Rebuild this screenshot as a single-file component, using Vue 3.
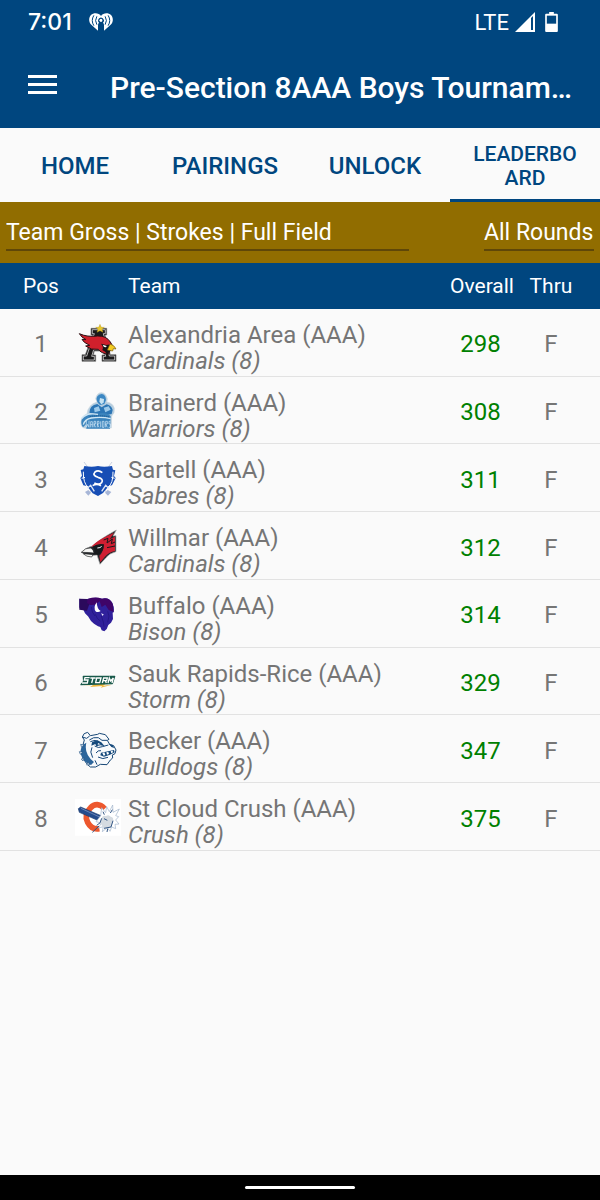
<script setup>
import { ref } from 'vue'

const tabs = ['HOME', 'PAIRINGS', 'UNLOCK', 'LEADERBOARD']
const activeTab = ref('LEADERBOARD')
const view = ref('Team Gross | Strokes | Full Field')
const round = ref('All Rounds')

const teams = [
  { pos: 1, logo: 'alexandria', school: 'Alexandria Area (AAA)', name: 'Cardinals (8)', overall: 298, thru: 'F' },
  { pos: 2, logo: 'brainerd', school: 'Brainerd (AAA)', name: 'Warriors (8)', overall: 308, thru: 'F' },
  { pos: 3, logo: 'sartell', school: 'Sartell (AAA)', name: 'Sabres (8)', overall: 311, thru: 'F' },
  { pos: 4, logo: 'willmar', school: 'Willmar (AAA)', name: 'Cardinals (8)', overall: 312, thru: 'F' },
  { pos: 5, logo: 'buffalo', school: 'Buffalo (AAA)', name: 'Bison (8)', overall: 314, thru: 'F' },
  { pos: 6, logo: 'sauk', school: 'Sauk Rapids-Rice (AAA)', name: 'Storm (8)', overall: 329, thru: 'F' },
  { pos: 7, logo: 'becker', school: 'Becker (AAA)', name: 'Bulldogs (8)', overall: 347, thru: 'F' },
  { pos: 8, logo: 'crush', school: 'St Cloud Crush (AAA)', name: 'Crush (8)', overall: 375, thru: 'F' },
]
</script>

<template>
  <div class="screen">
    <header class="top">
      <div class="status">
        <span class="clock">7:01</span>
        <svg class="radio" viewBox="0 0 72 54" aria-hidden="true">
          <path fill="#fff" d="M36 9C30-1 14-2 6 6c-8 9-7 21 1 29l20 18V36a10 10 0 0 1 3-7 8 8 0 1 1 12 0 10 10 0 0 1 3 7v17l20-18c8-8 9-20 1-29C58-2 42-1 36 9z" />
          <path fill="#00467f" d="M31 54V38q5-6 10 0v16z" />
          <circle cx="36" cy="22" r="5" fill="#fff" />
          <g fill="none" stroke="#00467f" stroke-width="3" stroke-linecap="round">
            <circle cx="36" cy="22" r="7" />
            <path d="M23 11q-7 12 0 23M49 11q7 12 0 23M14 8q-9 15 0 29M58 8q9 15 0 29" />
          </g>
        </svg>
        <span class="network">LTE</span>
        <svg class="signal" viewBox="0 0 60 60" aria-hidden="true">
          <path fill="#fff" d="M60 0v60H0z" />
          <path fill="#00467f" d="M48 18l6-6v42h-6z" />
        </svg>
        <svg class="battery" viewBox="0 0 38 60" aria-hidden="true">
          <path fill="#fff" d="M12 0h14v5h9q3 0 3 3v49q0 3-3 3H3q-3 0-3-3V8q0-3 3-3h9z" />
          <path fill="#00467f" d="M5 11h28v24H5z" />
        </svg>
      </div>
      <div class="bar">
        <button class="menu" aria-label="Open menu">
          <span></span><span></span><span></span>
        </button>
        <h1>Pre-Section 8AAA Boys Tournam…</h1>
      </div>
    </header>

    <nav class="tabs">
      <button
        v-for="tab in tabs"
        :key="tab"
        class="tab"
        :class="{ active: tab === activeTab, long: tab.length > 9 }"
        @click="activeTab = tab"
      >{{ tab }}</button>
    </nav>

    <main>
      <div class="filters">
        <select v-model="view" class="view" aria-label="Leaderboard view">
          <option>Team Gross | Strokes | Full Field</option>
        </select>
        <select v-model="round" class="round" aria-label="Round">
          <option>All Rounds</option>
        </select>
      </div>

      <table class="board">
        <thead>
          <tr>
            <th class="pos">Pos</th>
            <th class="crest"></th>
            <th class="team">Team</th>
            <th class="overall">Overall</th>
            <th class="thru">Thru</th>
          </tr>
        </thead>
        <tbody>
          <tr v-for="t in teams" :key="t.pos">
            <td class="pos">{{ t.pos }}</td>
            <td class="crest">
              <svg class="logo" viewBox="0 0 138 120" aria-hidden="true">
                <g v-if="t.logo === 'alexandria'">
                  <path fill="#1b1a1b" stroke="#777" stroke-width="2" d="M48 13h47v20h-5l16 59h17v20H81V93h7l-3-12H58l-3 12h7v19H21V92h10l22-59h-5z" />
                  <path fill="none" stroke="#fff" stroke-width="2" d="M52 17h39v12h-6l18 67h16v12H85V97h7l-5-20H56l-6 20h8v11H25V96h10l23-67h-6z" />
                  <path fill="#d0202c" stroke="#2a1114" stroke-width="3" d="M13 29q24 11 55 7 26-1 38 18l7 12-7 12-6 13q-22-3-30-15-22 3-38-10l12-2Q24 55 21 46l12 1Q19 40 13 29z" />
                  <path fill="#161314" d="M78 59l16 4 14-2 4 8-7 11-8 12q-6-10-15-14 5-9-4-19z" />
                  <path fill="#fff" d="M83 62l12 4-2 4q-8 0-10-8z" />
                  <path fill="#f4cc22" stroke="#77570d" stroke-width="2" d="M105 60q14 4 18 15l-8-1-2 7-16-3z" />
                  <path fill="#e9c82e" stroke="#a88b1d" stroke-width="1" d="M75 1l4 9h9l-7 6 3 9-9-5-9 5 3-9-7-6h9z" />
                </g>
                <g v-else-if="t.logo === 'brainerd'">
                  <path fill="#b5cddf" stroke="#c9d6df" stroke-width="2" d="M62 20Q66 2 79 2t18 19l-2 9q18 2 23 19l-1 13-7 10-1 36-78 1q-15-2-13-20 2-17 18-23 3-28 30-36z" />
                  <path fill="#3b87c3" d="M66 14q5-8 14-8 12 2 13 18l-5 12-13 3q-14-12-9-25z" />
                  <path fill="#c5e2f2" d="M75 18l12 3-1 11-7 5-6-8z" />
                  <path fill="#2c76b5" d="M43 62q1-22 24-26l13 10 15-9q14 3 18 17l-3 12-26 5z" />
                  <path fill="#9dcaea" d="M57 48l14-5 5 13-17 5zM86 47l15-4 6 10-16 8z" />
                  <path fill="#3b84bd" d="M20 83q19-22 49-18 26-6 38 8l-2 37H34l-1-13-9 9q-7-9-4-23z" />
                  <path fill="none" stroke="#cfe6f4" stroke-width="4" d="M19 80q15-19 50-13M25 98q4-16 24-20 30-5 58 2" />
                  <path fill="none" stroke="#16568e" stroke-width="3" stroke-dasharray="4 2" d="M44 74q30-6 60 1" />
                  <path fill="none" stroke="#dceefa" stroke-width="2" d="M34 86v20l4-9 4 9V86M47 106V89h5v17M47 98h5M57 106V88h5v8h-5l5 10M67 106V88h5v8h-5l5 10M77 88v18M82 88h5v18h-5zM92 106V88h5v8h-5l5 10M106 88h-4v8h4v10h-5" />
                </g>
                <g v-else-if="t.logo === 'sartell'">
                  <path fill="none" stroke="#afb9d2" stroke-width="2" d="M27 6l68 92M111 6l-68 92" />
                  <path fill="#174eb5" d="M28 18q23 4 41 0 17 4 42 0l3 11 7 2-4 17 5 6-11 22-9 1-18 22-15 9-16-8-17-22-11-2-9-22 5-7-4-17 8-2z" />
                  <path fill="none" stroke="#fff" stroke-width="3" d="M25 35q-1 35 15 47M114 35q1 35-15 47M20 55l10-3M119 55l-10-3" />
                  <path fill="none" stroke="#dce5f5" stroke-width="4" d="M37 85l10-9 11 18M101 85l-9-9-12 18" />
                  <path fill="none" stroke="#fff" stroke-width="5" d="M82 38q-12-10-22-2-9 10 9 16 18 5 11 16-8 8-22 1M53 77q12-8 25 0" />
                  <path fill="#a7b6d7" d="M30 96l10-6 8 8-8 9zM109 96l-11-6-8 8 9 9z" />
                </g>
                <g v-else-if="t.logo === 'willmar'">
                  <path fill="#25272b" stroke="#aaa" stroke-width="2" d="M19 73q16-16 34-19 17-18 71-48l-10 18 9-1v48q-20 5-30 18l-18 20-9-28-25 3q-12-1-22-11z" />
                  <path fill="#cf1f32" d="M50 55q18-20 67-41l-13 20 16-8v43q-19 4-29 16l-15 18-3-20q12-9 12-31-15-6-35 5z" />
                  <path fill="#17191c" d="M52 57q17-12 35-8 0 21-15 31l-20-1q10-6 6-15z" />
                  <path fill="none" stroke="#17191c" stroke-width="3" d="M86 36l13-5-3 14 16-12-3 14 11-5M96 59l24-5" />
                  <path fill="#f6f6f4" stroke="#26282b" stroke-width="2" d="M19 73q12-15 29-13 8 6 9 15-16-2-38-2zM25 77q15 1 29 3l-4 7q-16 0-25-10z" />
                  <path fill="none" stroke="#fff" stroke-width="3" d="M67 60q9 0 13-5" />
                </g>
                <g v-else-if="t.logo === 'buffalo'">
                  <path fill="#30209b" d="M13 11q13 3 24 1 25-7 45-1 19-5 30 12 7 14 5 28l-4 2 1 19-6 11-8 7q-3 13-12 19l-8-3-4-10-7-2-12-8-9-8-9-14-9-9-7-15-10-2z" />
                  <path fill="#2b0a5c" d="M13 11l24 1 6 16-7 19-23-3z" />
                  <path fill="#3f0468" d="M38 12q24-8 42-1 23-6 33 16l3 24-15-6-10-16-11 7-6-17-13 10-15 1-10-6z" />
                  <path fill="none" stroke="#20127c" stroke-width="2" d="M49 36q1 17 11 27M61 58q5 15 15 20M79 63l6 18 2 14M98 49l4 14-4 19" />
                  <path fill="#fff" d="M65 22q-12 17-2 28 8 3 14-2-11-6-12-26zM114 27q12 2 10 16-3 7-8 6 6-8-2-22z" />
                  <path fill="#eeeaff" d="M78 55l8 3-3 5z" />
                </g>
                <g v-else-if="t.logo === 'sauk'">
                  <path fill="#f0b83e" d="M43 66l53-6-12 8 27-3-34 9 5-5-37 3 10-7-33 5z" />
                  <path fill="#18594a" stroke="#18594a" stroke-width="4" stroke-linejoin="round" d="M25 40h94l-7 22-94 3 8-10z" />
                  <g fill="none" stroke="#fff" stroke-width="4">
                    <path d="M44 44H30l-2 7h11l-2 9H21M46 45h16M54 45l-4 15M65 45h13l-4 14H62zM82 60l4-15h11l-2 8H84M91 53l3 7M99 60l4-15 4 9 8-9-4 15" />
                  </g>
                </g>
                <g v-else-if="t.logo === 'becker'">
                  <path fill="#f8fafc" stroke="#174776" stroke-width="3" d="M22 18q3-13 16-14l8 10 22-4 5-3 18 4 11 14-5 3 8 14 11 2 7 13-3 11-8 4 1 9-7 6-10 14-20-1-14 8H46Q21 90 20 56l8-29z" />
                  <path fill="#2c659b" d="M24 41l10-6q-8 34 23 58l-9 9Q15 89 17 57z" />
                  <path fill="none" stroke="#15477a" stroke-width="3" d="M22 18l13 4 9-7M43 27q12-10 27-7l11 8 15 0M46 32l14-4 13 8M51 49q-8 13 2 31M59 45q11 8 23 2l18-5M63 66q6-9 15-7M69 78q14 9 30 1M60 88l6 13" />
                  <path fill="#164a7c" d="M51 34l15-7 13 7 10 12-13-3-12 3-3-7-12 5zM102 38l11 3 5 10-9-3zM78 65l39-8 2 7-14 7-18 6-11-4z" />
                  <path fill="#fff" d="M82 66l6-2 3 8-5 2zM94 64l6-1 2 6-6 2zM107 61l6-2 1 5-5 3zM69 36l8 4-9 1z" />
                  <path fill="#e9f1f8" stroke="#1b4d80" stroke-width="2" d="M17 40l10 3-7 6zM13 62l11 1-8 7zM19 84l9-3-4 9zM35 102l4-9 5 8z" />
                </g>
                <g v-else>
                  <path fill="#fff" d="M0 0h138v110H0z" />
                  <path fill="none" stroke="#ed582e" stroke-width="17" d="M89 29Q66 6 46 27 26 47 38 70q12 23 35 19" />
                  <path fill="#244c8d" stroke="#18386b" stroke-width="2" d="M10 29l7-5 68 29-3 17-69-30z" />
                  <path fill="none" stroke="#6983b4" stroke-width="3" d="M18 28l62 29" />
                  <path fill="#fff" stroke="#9fb2ca" stroke-width="2" d="M77 50l3-24 12 15 3-18 8 15 10-20 1 22 19-10-11 20 9 3-9 10 10 12-12 1 2 13-12-5-5 13-8-11-15 12 3-15-15 4 9-15-16-4z" />
                  <path fill="#d5dbe1" d="M80 58q2-11 13-7 8-6 14 2 10 2 7 12l-6 19-21 4-12-17z" />
                  <path fill="none" stroke="#315584" stroke-width="3" d="M114 65l-6 19-21 4M75 71l5-13M84 38l4 9M112 32l-6 10M65 79l11-8M52 100l20-19M96 99l2-10M87 59l10 5" />
                </g>
              </svg>
            </td>
            <td class="team">
              <div>{{ t.school }}</div>
              <em>{{ t.name }}</em>
            </td>
            <td class="overall">{{ t.overall }}</td>
            <td class="thru">{{ t.thru }}</td>
          </tr>
        </tbody>
      </table>
    </main>

    <footer class="gesture"><span></span></footer>
  </div>
</template>

<style>
body {
  background: #fafafa;
}
</style>

<style scoped>
.screen {
  display: flex;
  flex-direction: column;
  min-height: 100vh;
  background: #fafafa;
  color: #757575;
  font-family: Roboto, "Liberation Sans", sans-serif;
}
button,
select {
  margin: 0;
  border: 0;
  border-radius: 0;
  padding: 0;
  background: none;
  color: inherit;
  font: inherit;
}
.top {
  background: #00467f;
  color: #fff;
}
.status {
  display: flex;
  align-items: center;
  height: 44px;
  padding: 0 42px 0 28px;
}
.clock {
  font: 500 23px/44px Inter, Roboto, sans-serif;
}
.radio {
  width: 24px;
  height: 18px;
  margin-left: 17px;
}
.network {
  margin-left: auto;
  font-size: 22px;
}
.signal {
  width: 20px;
  height: 20px;
  margin-left: 6px;
}
.battery {
  width: 13px;
  height: 20px;
  margin-left: 10px;
}
.bar {
  display: flex;
  align-items: center;
  height: 84px;
  padding: 0 12px 4px 28px;
  box-sizing: border-box;
}
.menu {
  display: flex;
  flex-direction: column;
  gap: 5px;
  width: 29px;
  flex: none;
}
.menu span {
  height: 3px;
  background: #fff;
}
h1 {
  margin: 0 0 0 53px;
  padding-top: 8px;
  font-size: 30px;
  line-height: 40px;
  font-weight: 500;
  white-space: nowrap;
}
.tabs {
  display: grid;
  grid-template-columns: repeat(4, 1fr);
  min-height: 74px;
}
.tab {
  border-bottom: 3px solid transparent;
  padding-top: 5px;
  color: #00467f;
  font-size: 24px;
  line-height: 24px;
  font-weight: 500;
}
.tab.long {
  padding-right: 20px;
  padding-left: 20px;
  font-size: 21px;
  word-break: break-all;
}
.tab.active {
  border-bottom-color: #00467f;
}
.filters {
  display: grid;
  grid-template-columns: 1fr auto;
  gap: 75px;
  padding: 10px 6px 12px;
  background: #916d00;
  color: #fff;
}
.filters select {
  appearance: none;
  border-bottom: 2px solid #5f4708;
  height: 39px;
  padding-top: 4px;
  font-size: 23px;
}
.board {
  width: 100%;
  height: 588px;
  border-collapse: collapse;
  table-layout: fixed;
  font-size: 24px;
  line-height: 26px;
  text-align: center;
}
th,
td {
  padding: 0;
}
th {
  height: 46px;
  background: #00467f;
  color: #fff;
  font-size: 21px;
  font-weight: 400;
}
td {
  border-bottom: 1px solid #e2e2e2;
  padding-top: 4px;
}
.pos {
  width: 82px;
}
.crest {
  width: 46px;
}
.logo {
  display: block;
  width: 46px;
  height: 40px;
  margin-left: -7px;
}
.team {
  text-align: left;
}
td.team {
  padding-top: 11px;
}
.overall {
  width: 66px;
}
td.overall {
  padding-right: 3px;
  color: #008000;
}
.thru {
  width: 72px;
  padding-right: 13px;
}
.gesture {
  display: flex;
  justify-content: center;
  align-items: center;
  height: 25px;
  margin-top: auto;
  background: #000;
}
.gesture span {
  width: 110px;
  height: 3px;
  border-radius: 2px;
  background: #fff;
}
</style>
